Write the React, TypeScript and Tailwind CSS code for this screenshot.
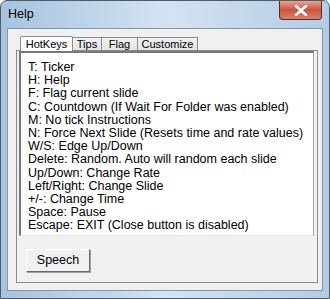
import React from 'react';

const LINES: string[] = [
  'T: Ticker',
  'H: Help',
  'F: Flag current slide',
  'C: Countdown (If Wait For Folder was enabled)',
  'M: No tick Instructions',
  'N: Force Next Slide (Resets time and rate values)',
  'W/S: Edge Up/Down',
  'Delete: Random. Auto will random each slide',
  'Up/Down: Change Rate',
  'Left/Right: Change Slide',
  '+/-: Change Time',
  'Space: Pause',
  'Escape: EXIT (Close button is disabled)',
];

const TABS = [
  { label: 'HotKeys', w: 'w-[53px]' },
  { label: 'Tips', w: 'w-[29px]' },
  { label: 'Flag', w: 'w-[36px]' },
  { label: 'Customize', w: 'w-[60px]' },
];

export default function App() {
  return (
    <div className="w-[330px] h-[299px] bg-white font-['Liberation_Sans',sans-serif] text-[12.5px] text-black">
      {/* window frame */}
      <div className="relative w-[330px] h-[299px] rounded-t-[7px] border border-[#4f5d6b] bg-gradient-to-r from-[#a7c3e0] via-[#d3e3f2] to-[#b5cce5] flex flex-col">
        <div className="h-[27px] flex items-center pl-[7px]">
          <span className="text-[12.5px]">Help</span>
        </div>

        {/* close button */}
        <div className="absolute right-[7px] top-0 w-[43px] h-[19px] rounded-b-[4px] border border-t-0 border-[#5a2a23] bg-gradient-to-b from-[#e8a493] via-[#c8543d] to-[#d5826b] flex items-center justify-center">
          <svg width="14" height="11" viewBox="0 0 14 11">
            <path d="M2 1 L12 10 M12 1 L2 10" stroke="#ffffff" strokeWidth="2.6" strokeLinecap="round" />
          </svg>
        </div>

        {/* client area */}
        <div className="mx-[6px] h-[263px] border border-[#8296ab] bg-[#f0f0f0] pt-[7px] pl-[8px] pr-[4px]">
          {/* tab strip */}
          <div className="flex h-[14px] items-end pl-[4px] text-[11px]">
            {TABS.map((t, i) =>
              i === 0 ? (
                <div
                  key={t.label}
                  className={`${t.w} h-[15px] -mb-px z-10 border border-b-0 border-[#898c95] bg-[#fbfbfb] flex items-center justify-center rounded-t-[2px]`}
                >
                  {t.label}
                </div>
              ) : (
                <div
                  key={t.label}
                  className={`${t.w} h-[13px] border border-b-0 border-l-0 border-[#898c95] bg-gradient-to-b from-[#f2f2f2] to-[#e3e3e3] flex items-center justify-center`}
                >
                  {t.label}
                </div>
              ),
            )}
          </div>

          {/* tab panel */}
          <div className="w-[302px] h-[233px] border border-[#898c95] bg-[#f0f0f0] pl-[2px] flex flex-col">
            {/* list box */}
            <div className="w-[295px] h-[185px] border-t-2 border-l-2 border-b border-r border-t-[#787878] border-l-[#787878] border-b-[#e3e3e3] border-r-[#a0a0a0] bg-white pl-[7px] pt-[8px]">
              {LINES.map((l) => (
                <div key={l} className="h-[13.2px] leading-[13.2px] whitespace-nowrap">
                  {l}
                </div>
              ))}
            </div>

            {/* button */}
            <div className="pl-[7px] pt-[13px]">
              <div className="w-[64px] h-[23px] border border-t-white border-l-white border-r-[#696969] border-b-[#696969] bg-[#f0f0f0] shadow-[1px_1px_0_#a0a0a0] flex items-center justify-center">
                Speech
              </div>
            </div>
          </div>
        </div>
      </div>
    </div>
  );
}
